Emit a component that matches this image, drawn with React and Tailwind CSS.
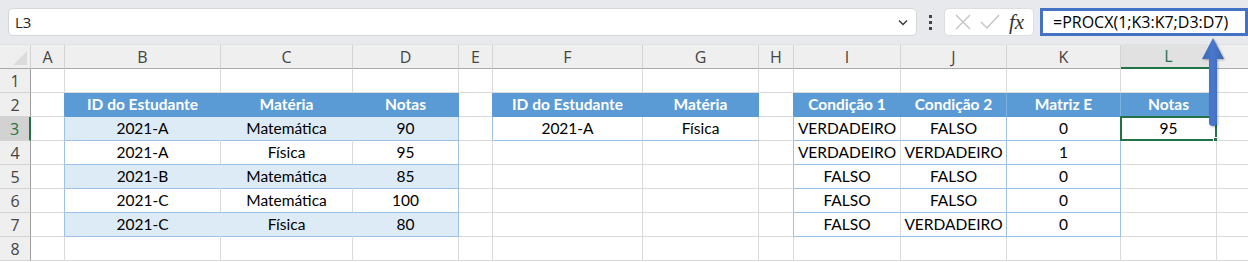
import React from 'react';

const COLS = ['A', 'B', 'C', 'D', 'E', 'F', 'G', 'H', 'I', 'J', 'K', 'L', 'M'];
const ROWS = [1, 2, 3, 4, 5, 6, 7, 8];

const DATA = {
  2: { B: 'ID do Estudante', C: 'Matéria', D: 'Notas', F: 'ID do Estudante', G: 'Matéria', I: 'Condição 1', J: 'Condição 2', K: 'Matriz E', L: 'Notas' },
  3: { B: '2021-A', C: 'Matemática', D: '90', F: '2021-A', G: 'Física', I: 'VERDADEIRO', J: 'FALSO', K: '0', L: '95' },
  4: { B: '2021-A', C: 'Física', D: '95', I: 'VERDADEIRO', J: 'VERDADEIRO', K: '1' },
  5: { B: '2021-B', C: 'Matemática', D: '85', I: 'FALSO', J: 'FALSO', K: '0' },
  6: { B: '2021-C', C: 'Matemática', D: '100', I: 'FALSO', J: 'FALSO', K: '0' },
  7: { B: '2021-C', C: 'Física', D: '80', I: 'FALSO', J: 'VERDADEIRO', K: '0' },
};

const HEADER_COLS = ['B', 'C', 'D', 'F', 'G', 'I', 'J', 'K', 'L'];

// returns [bg, border-right, border-bottom, text]
function cellStyle(r, c) {
  let bg = 'bg-white';
  let br = 'border-r-[#dadada]';
  let bb = 'border-b-[#dadada]';
  let text = 'text-black';

  if (r === 2 && HEADER_COLS.includes(c)) {
    bg = 'bg-[#5b9bd5]';
    text = 'text-white font-bold';
    br = c === 'J' || c === 'K' ? 'border-r-[#7fb1df]' : 'border-r-[#5b9bd5]';
    bb = 'border-b-[#5b9bd5]';
    return [bg, br, bb, text];
  }

  if (r >= 3 && r <= 7) {
    if (['B', 'C', 'D'].includes(c)) {
      const filled = r % 2 === 1;
      if (filled) bg = 'bg-[#ddebf7]';
      bb = 'border-b-[#9bc2e6]';
      if (c === 'D') br = 'border-r-[#9bc2e6]';
      else if (filled) br = 'border-r-[#ddebf7]';
    }
    if (c === 'A' || c === 'H') br = 'border-r-[#9bc2e6]';
    if (['I', 'J', 'K'].includes(c)) {
      bb = 'border-b-[#9bc2e6]';
      if (c !== 'I') br = 'border-r-[#9bc2e6]';
    }
    if (r === 3 && (c === 'F' || c === 'G')) bb = 'border-b-[#9bc2e6]';
    if (r === 3 && c === 'E') br = 'border-r-[#9bc2e6]';
  }
  if (r === 2 && c === 'A') br = 'border-r-[#5b9bd5]';
  if (r === 2 && (c === 'E' || c === 'H')) br = 'border-r-[#5b9bd5]';

  return [bg, br, bb, text];
}

function TopBar() {
  return (
    <div className="flex h-[45px] items-center bg-[#e8e9ec] pl-2 border-b border-[#e1e2e6]">
      <div className="flex h-[28px] w-[909px] items-center justify-between rounded-[5px] border border-[#d6d6d9] bg-white pl-[6px] pr-[6px] font-['Open_Sans',sans-serif] text-[15px] text-[#222]">
        <span>L3</span>
        <svg width="14" height="14" viewBox="0 0 14 14" className="text-[#333]">
          <path d="M3 5.5 L7 9.5 L11 5.5" fill="none" stroke="currentColor" strokeWidth="1.3" />
        </svg>
      </div>
      <div className="flex w-[27px] flex-col items-center justify-center gap-[3px]">
        <span className="h-[3px] w-[3px] bg-[#444]" />
        <span className="h-[3px] w-[3px] bg-[#444]" />
        <span className="h-[3px] w-[3px] bg-[#444]" />
      </div>
      <div className="flex h-[28px] w-[90px] items-center gap-[6px] rounded-[5px] border border-[#dedee1] bg-white pl-[8px]">
        <svg width="20" height="20" viewBox="0 0 20 20">
          <path d="M3 3 L17 17 M17 3 L3 17" stroke="#c2c2c2" strokeWidth="1.3" fill="none" />
        </svg>
        <svg width="22" height="20" viewBox="0 0 22 20">
          <path d="M2 10 L8 16 L20 3" stroke="#c2c2c2" strokeWidth="1.3" fill="none" />
        </svg>
        <span className="ml-[2px] font-['Liberation_Serif',serif] text-[21px] italic leading-none text-[#333]">
          fx
        </span>
      </div>
      <div className="ml-[6px] flex h-[28px] flex-1 items-center border-[3px] border-[#4472c4] bg-white pl-[10px] font-['Open_Sans',sans-serif] text-[16px] text-black">
        =PROCX(1;K3:K7;D3:D7)
      </div>
    </div>
  );
}

function Arrow() {
  return (
    <svg
      className="pointer-events-none absolute left-[1199px] top-[36px]"
      width="30"
      height="96"
      viewBox="0 0 30 96"
    >
      <defs>
        <linearGradient id="ag" x1="0" x2="1" y1="0" y2="0">
          <stop offset="0" stopColor="#3f68b8" />
          <stop offset="0.5" stopColor="#4a78cc" />
          <stop offset="1" stopColor="#3a62ae" />
        </linearGradient>
        <filter id="sh" x="-50%" y="-20%" width="200%" height="140%">
          <feDropShadow dx="1" dy="1" stdDeviation="1.2" floodColor="#000" floodOpacity="0.3" />
        </filter>
      </defs>
      <path
        d="M14 2 L25 23 L18 23 L18 87 Q18 90 14 90 Q10 90 10 87 L10 23 L3 23 Z"
        fill="url(#ag)"
        filter="url(#sh)"
      />
    </svg>
  );
}

export default function App() {
  return (
    <div className="relative h-[262px] w-[1248px] overflow-hidden bg-white font-['Lato',sans-serif]">
      <TopBar />
      <div className="grid w-[1300px] grid-cols-[31px_34px_156px_132px_106px_34px_150px_116px_35px_107px_106px_114px_96px_83px] auto-rows-[24px]">
        {/* corner */}
        <div className="relative border-b border-r border-b-[#ababab] border-r-[#d4d4d4] bg-[#efefef]">
          <div className="absolute bottom-[3px] right-[3px] h-0 w-0 border-b-[14px] border-l-[14px] border-b-[#dcdcdc] border-l-transparent" />
        </div>
        {COLS.map((c) =>
          c === 'L' ? (
            <div
              key={c}
              className="flex items-center justify-center border-b-2 border-r border-b-[#217346] border-r-[#d4d4d4] bg-[#e1e1e1] font-['Open_Sans',sans-serif] text-[16px] text-[#217346]"
            >
              {c}
            </div>
          ) : (
            <div
              key={c}
              className="flex items-center justify-center border-b border-r border-b-[#ababab] border-r-[#d4d4d4] bg-[#efefef] font-['Open_Sans',sans-serif] text-[16px] text-[#444]"
            >
              {c === 'M' ? '' : c}
            </div>
          )
        )}
        {ROWS.map((r) => (
          <React.Fragment key={r}>
            {r === 3 ? (
              <div className="flex items-center justify-center border-b border-r-2 border-b-[#d4d4d4] border-r-[#217346] bg-[#d2d2d2] font-['Open_Sans',sans-serif] text-[16px] text-[#217346]">
                {r}
              </div>
            ) : (
              <div className="flex items-center justify-center border-b border-r border-b-[#d4d4d4] border-r-[#9e9e9e] bg-[#efefef] font-['Open_Sans',sans-serif] text-[16px] text-[#444]">
                {r}
              </div>
            )}
            {COLS.map((c) => {
              const [bg, br, bb, text] = cellStyle(r, c);
              const value = DATA[r]?.[c];
              const selected = r === 3 && c === 'L';
              return (
                <div
                  key={c}
                  className={`relative flex items-center justify-center whitespace-nowrap border-b border-r text-[15.5px] ${bg} ${br} ${bb} ${text}`}
                >
                  {value}
                  {selected && (
                    <div className="absolute -left-[1px] -top-[1px] h-[25px] w-[97px] border-2 border-[#217346]">
                      <div className="absolute -bottom-[4px] -right-[4px] h-[6px] w-[6px] border border-white bg-[#217346]" />
                    </div>
                  )}
                </div>
              );
            })}
          </React.Fragment>
        ))}
      </div>
      <Arrow />
    </div>
  );
}
